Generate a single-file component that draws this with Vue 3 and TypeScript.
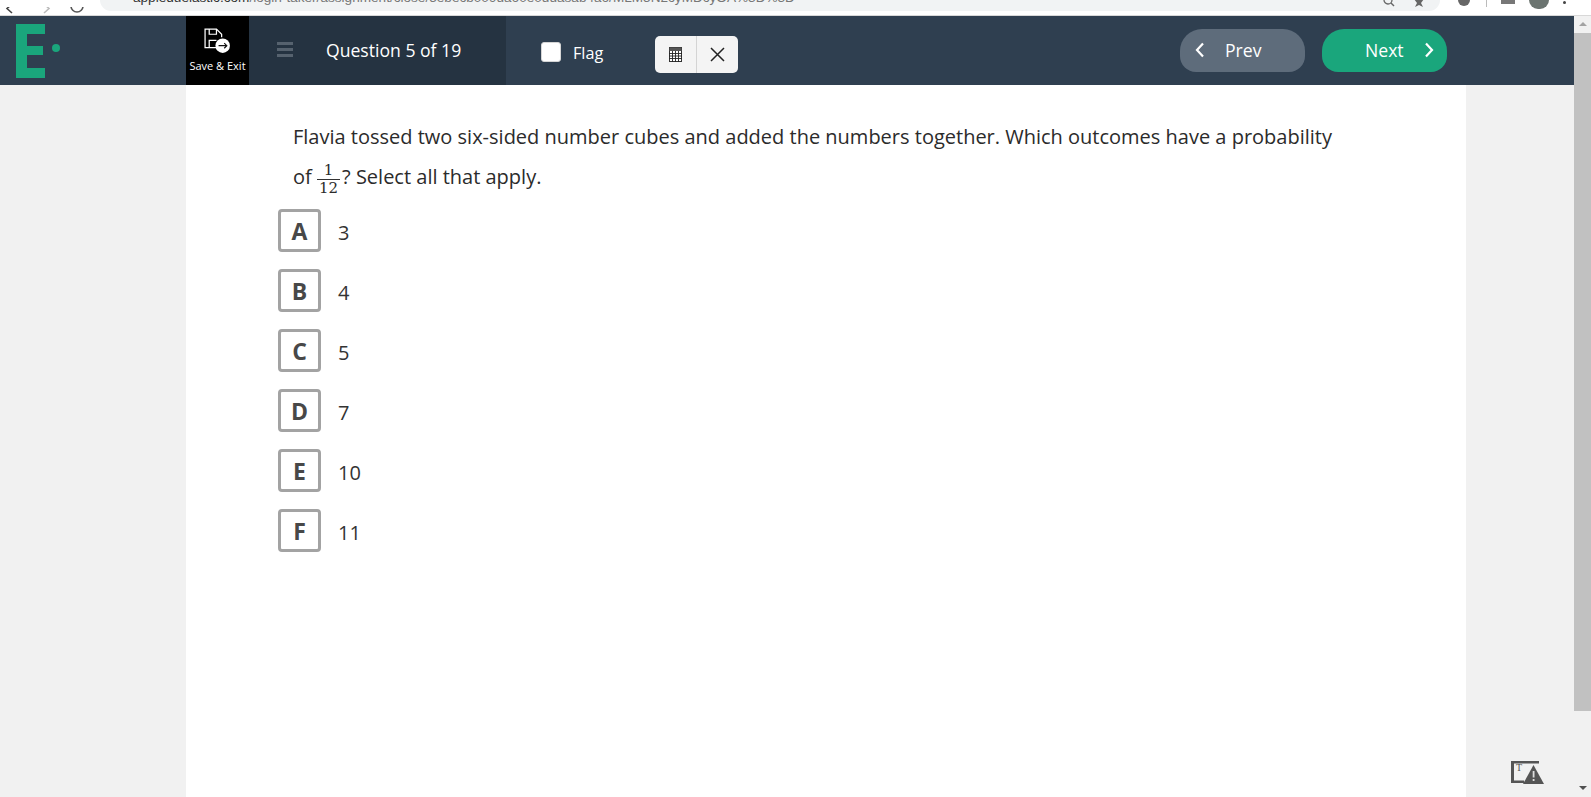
<script setup lang="ts">
const options = [
  { key: 'A', text: '3' },
  { key: 'B', text: '4' },
  { key: 'C', text: '5' },
  { key: 'D', text: '7' },
  { key: 'E', text: '10' },
  { key: 'F', text: '11' },
]
</script>

<template>
  <div class="page">
    <div class="main">
      <div class="chrome">
        <div class="nav">
          <svg width="100" height="10" viewBox="0 0 100 10" fill="none">
            <path d="M12 -3 L7 1.5 L12 6" stroke="#444" stroke-width="1.6" />
            <path d="M44 -3 L49 1.5 L44 6" stroke="#bbb" stroke-width="1.6" />
            <path d="M83 -1 a6 6 0 1 1 -12 0" stroke="#555" stroke-width="1.6" />
          </svg>
        </div>
        <div class="url">
          <span class="url-text"><b>appleduelastic.com</b>/login-taker/assignment/close/5ebecb009da60e0ddasab4a6/MLM5N2cyMDcyOA%3D%3D</span>
          <div class="url-icons">
            <svg width="12" height="8" viewBox="0 0 12 8" fill="none"><circle cx="5" cy="0" r="4" stroke="#666" stroke-width="1.3" /><path d="M8 3L11 6" stroke="#666" stroke-width="1.4" /></svg>
            <svg width="12" height="8" viewBox="0 0 12 8"><path d="M1 -1H11L8 3L10 7L6 5L2 7L4 3Z" fill="#666" /></svg>
          </div>
        </div>
        <div class="chrome-right">
          <span class="dot"></span>
          <span class="sep"></span>
          <span class="ext"></span>
          <span class="avatar"></span>
          <span class="more"></span>
        </div>
      </div>

      <header class="topbar">
        <div class="logo">
          <svg width="46" height="54" viewBox="0 0 46 54">
            <path d="M0 0H29V10H11V22H27V31H11V44H29V54H0Z" fill="#1aa67c" />
            <circle cx="40" cy="24" r="4" fill="#1aa67c" />
          </svg>
        </div>
        <div class="save">
          <svg width="29" height="27" viewBox="0 0 28 26" fill="none">
            <path d="M16 19H2V1H13L18 6V9" stroke="#fff" stroke-width="1.2" />
            <path d="M6 1V6H13V1M6 19V12H13" stroke="#fff" stroke-width="1.2" />
            <circle cx="19" cy="17" r="7" fill="#fff" />
            <path d="M15 17H23M20.5 14.5L23 17L20.5 19.5" stroke="#111" stroke-width="1.1" />
          </svg>
          <span>Save &amp; Exit</span>
        </div>
        <div class="panel">
          <div class="burger"><i></i><i></i><i></i></div>
          <span class="qnum">Question 5 of 19</span>
        </div>
        <label class="flag"><span class="check"></span><span class="flag-text">Flag</span></label>
        <div class="tools">
          <button class="tool" type="button">
            <svg width="13" height="15" viewBox="0 0 13 15" fill="none">
              <rect x="0.5" y="0.5" width="12" height="14" fill="#fff" stroke="#333" />
              <rect x="0.5" y="0.5" width="12" height="3.5" fill="#555" />
              <path d="M0 6.5H13M0 9H13M0 11.5H13M3.5 4V15M6.5 4V15M9.5 4V15" stroke="#222" stroke-width="0.9" />
            </svg>
          </button>
          <button class="tool" type="button">
            <svg width="15" height="15" viewBox="0 0 15 15" fill="none">
              <path d="M1 1L14 14M14 1L1 14" stroke="#222" stroke-width="1.5" />
            </svg>
          </button>
        </div>
        <div class="pager">
          <div class="pill prev">
            <svg width="10" height="16" viewBox="0 0 10 16" fill="none"><path d="M8 1.5L2 8L8 14.5" stroke="#fff" stroke-width="2.2" /></svg>
            <span>Prev</span>
          </div>
          <div class="pill next">
            <span>Next</span>
            <svg width="10" height="16" viewBox="0 0 10 16" fill="none"><path d="M2 1.5L8 8L2 14.5" stroke="#fff" stroke-width="2.2" /></svg>
          </div>
        </div>
      </header>

      <div class="stage">
        <main class="sheet">
          <div class="question">
            <div class="line">Flavia tossed two six-sided number cubes and added the numbers together. Which outcomes have a probability</div>
            <div class="line second">
              <span>of&nbsp;</span>
              <span class="frac"><span class="num">1</span><span class="den">12</span></span>
              <span>? Select all that apply.</span>
            </div>
          </div>
          <ul class="options">
            <li v-for="o in options" :key="o.key" class="option">
              <span class="letter">{{ o.key }}</span>
              <span class="value">{{ o.text }}</span>
            </li>
          </ul>
        </main>
        <aside class="gutter">
          <svg class="report" width="34" height="24" viewBox="0 0 34 24">
            <path d="M0 22V0H28V2.5H3V19.5H13V22Z" fill="#555" />
            <text x="5" y="10" class="t">T</text>
            <path d="M22.5 4L33 23H12Z" fill="#555" />
            <rect x="21.7" y="10" width="1.8" height="6.5" fill="#ddd" />
            <rect x="21.7" y="18" width="1.8" height="2" fill="#ddd" />
          </svg>
        </aside>
      </div>
    </div>

    <div class="scrollbar">
      <span class="arrow up"></span>
      <div class="track"><div class="thumb"></div></div>
      <span class="arrow down"></span>
    </div>
  </div>
</template>

<style>
html, body { margin: 0; padding: 0; overflow: hidden; background: #f1f1f1; }
</style>

<style scoped>
.page {
  width: 1591px;
  height: 797px;
  display: flex;
  overflow: hidden;
  font-family: "Open Sans", sans-serif;
  color: #2b2b2b;
}
.main { flex: 1; min-width: 0; display: flex; flex-direction: column; }
.chrome {
  height: 16px;
  margin-right: -17px;
  flex: none;
  background: #fff;
  border-bottom: 1px solid #d8d8d8;
  box-sizing: border-box;
  display: flex;
  overflow: hidden;
}
.nav { width: 100px; flex: none; height: 10px; }
.url {
  width: 1340px;
  height: 11px;
  flex: none;
  background: #f1f3f4;
  border-radius: 0 0 14px 14px;
  overflow: hidden;
  box-sizing: border-box;
  padding: 0 15px 0 33px;
  display: flex;
  justify-content: space-between;
}
.url-text {
  display: block;
  margin-top: -11px;
  font: 13.6px/18px "Liberation Sans", sans-serif;
  color: #777;
  white-space: nowrap;
}
.url-text b { font-weight: 400; color: #333; }
.url-icons { display: flex; gap: 18px; align-items: flex-start; }
.chrome-right { flex: 1; display: flex; align-items: flex-start; padding-left: 18px; }
.dot { width: 12px; height: 6px; background: #666; border-radius: 0 0 6px 6px; flex: none; }
.sep { width: 1px; height: 7px; background: #bbb; margin-left: 16px; flex: none; }
.ext { width: 14px; height: 4px; background: #777; margin-left: 14px; flex: none; }
.avatar { width: 20px; height: 9px; background: #6b7470; border-radius: 0 0 10px 10px; margin-left: 14px; flex: none; }
.more { width: 3px; height: 3px; border-radius: 50%; background: #444; margin: 1px 0 0 14px; flex: none; }

.topbar {
  height: 69px;
  flex: none;
  background: #2f3f50;
  display: flex;
  align-items: stretch;
  color: #fff;
}
.logo { width: 186px; flex: none; box-sizing: border-box; padding: 8px 0 0 16px; }
.logo svg { display: block; }
.save {
  width: 63px;
  flex: none;
  background: #000;
  display: flex;
  flex-direction: column;
  align-items: center;
  padding-top: 12px;
  box-sizing: border-box;
  font-size: 11px;
  line-height: 14px;
  gap: 4px;
}
.save span { white-space: nowrap; }
.panel {
  width: 257px;
  flex: none;
  background: #253341;
  display: flex;
  align-items: center;
  padding: 0 0 3px 28px;
  box-sizing: border-box;
}
.burger { width: 16px; display: flex; flex-direction: column; gap: 3px; }
.burger i { display: block; height: 3px; background: #56626e; }
.qnum { font-size: 17.6px; margin: 1px 0 0 33px; white-space: nowrap; }
.flag {
  display: flex;
  align-items: center;
  margin-left: 35px;
  width: 114px;
  flex: none;
  font-size: 16.2px;
  gap: 12px;
  padding-top: 3px;
  box-sizing: border-box;
}
.flag-text { padding-top: 1px; }
.check { width: 20px; height: 20px; background: #fff; border-radius: 3px; flex: none; border: 1px solid #d5d5d5; box-sizing: border-box; }
.tools {
  align-self: flex-start;
  margin-top: 20px;
  width: 83px;
  height: 37px;
  background: #f4f4f4;
  border-radius: 5px;
  display: flex;
  flex: none;
  overflow: hidden;
}
.tool {
  flex: none;
  width: 41.5px;
  padding: 0;
  border: 0;
  background: transparent;
  display: flex;
  align-items: center;
  justify-content: center;
}
.tool:first-child { border-right: 1px solid #d4d4d4; }
.pager {
  margin-left: auto;
  margin-right: 127px;
  display: flex;
  gap: 17px;
  align-self: flex-start;
  margin-top: 13px;
}
.pill {
  width: 125px;
  height: 43px;
  border-radius: 22px 22px 16px 16px;
  display: flex;
  align-items: center;
  font-size: 17.6px;
  box-sizing: border-box;
  padding-bottom: 1px;
}
.prev { background: #5e6c7b; padding-left: 15px; gap: 20px; }
.next { background: #1aa67c; padding-left: 43px; gap: 20px; }

.stage { flex: 1; min-height: 0; display: flex; background: #f1f1f1; }
.sheet {
  width: 1280px;
  margin-left: 186px;
  flex: none;
  background: #fff;
  box-sizing: border-box;
  padding: 32px 0 0 92px;
}
.question { padding-left: 15px; font-size: 20px; line-height: 40px; color: #2b2b2b; }
.line { white-space: nowrap; height: 40px; }
.second { display: flex; align-items: center; }
.frac {
  display: inline-flex;
  flex-direction: column;
  align-items: center;
  font-family: "DejaVu Serif", "Liberation Serif", serif;
  font-size: 15px;
  line-height: 17.5px;
  margin: 5px 2px 0 0;
}
.num { border-bottom: 1px solid #333; padding: 0 2px; width: 100%; text-align: center; box-sizing: border-box; }
.den { padding: 0 2px; }
.options { list-style: none; margin: 12px 0 0; padding: 0; display: flex; flex-direction: column; gap: 17px; }
.option { display: flex; align-items: center; height: 43px; }
.letter {
  width: 43px;
  height: 43px;
  box-sizing: border-box;
  border: 3px solid #a3a3a3;
  border-radius: 4px;
  display: flex;
  align-items: center;
  justify-content: center;
  font-size: 23px;
  font-weight: 700;
  color: #484848;
  flex: none;
}
.value { margin-left: 17px; font-size: 20px; color: #333; padding-top: 4px; }
.gutter { flex: 1; position: relative; }
.report { position: absolute; right: 29px; top: 676px; }
.t { font: 10px "Liberation Serif", serif; fill: #555; }

.scrollbar {
  width: 17px;
  flex: none;
  margin-top: 16px;
  background: #f1f1f1;
  display: flex;
  flex-direction: column;
  position: relative;
  z-index: 1;
  align-items: stretch;
}
.arrow { height: 17px; flex: none; position: relative; }
.arrow::after {
  content: "";
  position: absolute;
  left: 4.5px;
  border-left: 4px solid transparent;
  border-right: 4px solid transparent;
}
.up::after { top: 6px; border-bottom: 4px solid #a3a3a3; }
.down::after { top: 6px; border-top: 4px solid #505050; }
.track { flex: 1; }
.thumb { height: 678px; background: #c1c1c1; }
</style>
